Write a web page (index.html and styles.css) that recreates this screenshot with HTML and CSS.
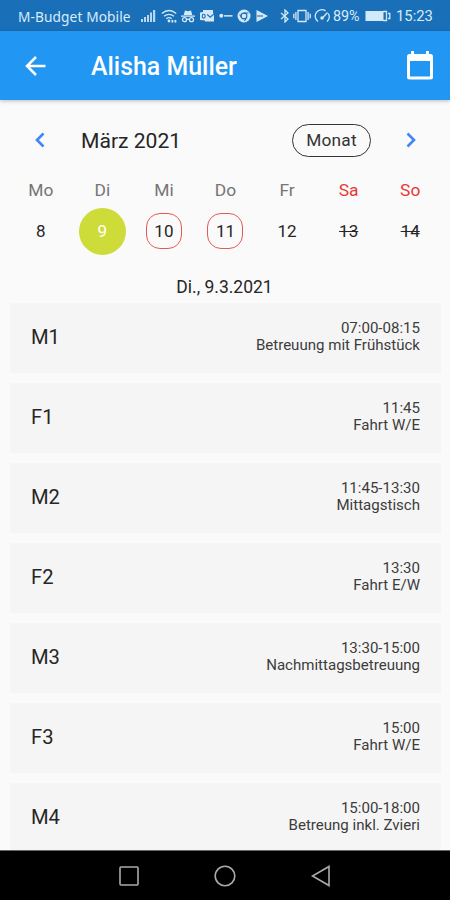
FILE: index.html
```
<!DOCTYPE html>
<html lang="de">
<head>
<meta charset="utf-8">
<title>Alisha Müller</title>
<link rel="stylesheet" href="styles.css">
</head>
<body>
<div class="phone">
  <div class="status">
    <span class="carrier">M-Budget Mobile</span>
    <div class="notifications">
      <svg width="15" height="14" viewBox="0 0 15 14"><path d="M0 10h2v3H0zM3 8h2v5H3zM6 6h2v7H6zM9 3.500h2v9.500H9zM12 1h2.200v12H12z" opacity=".85"/></svg>
      <svg width="16" height="14" viewBox="0 0 16 14"><g class="line"><path d="M.8 4.500Q8-1.500 15.200 4.500M3 7.300q5-4 10 0M5.300 9.700q2.700-2 5.400 0"/></g><circle cx="8" cy="12" r="1.400"/><path d="M10.500 11h1.800v2.500h-1.800zM13.500 11h1.800v2.500h-1.800z"/></svg>
      <svg width="14" height="14" viewBox="0 0 14 14"><path d="M4 1.500l3 .7 3-.7L11.300 6H2.700zM0 6.500h14v1.300H0z"/><g class="line"><circle cx="3.500" cy="10.700" r="2"/><circle cx="10.500" cy="10.700" r="2"/><path d="M5.500 10.300h3"/></g></svg>
      <svg width="14" height="14" viewBox="0 0 14 14"><path d="M0 3.500l3-.5V1h10v3l1 1v7.500H5v-1L0 11z"/><ellipse class="cutline" cx="3.700" cy="7.200" rx="1.500" ry="1.900"/><path class="cutline" d="M7.200 5.500l3 2.700L14 5"/></svg>
      <svg width="14" height="14" viewBox="0 0 14 14"><circle cx="2.300" cy="6.800" r="2"/><path d="M5 6.100h8.500v1.500H5z"/></svg>
      <svg width="14" height="14" viewBox="0 0 14 14"><circle cx="7" cy="7" r="6.500"/><g class="cutline"><circle cx="7" cy="7" r="2.900"/><path d="M7 4h4.500M4.500 8.500l-1.800-3M9.500 8.500L7.500 12"/></g></svg>
      <svg width="12" height="14" viewBox="0 0 12 14"><path d="M.5 1L12 7 .5 13z"/><path class="cutline" d="M1 7h6"/></svg>
    </div>
    <div class="system">
      <svg width="10" height="14" viewBox="0 0 10 14"><path class="line" d="M1 4l7 6-3 3V1l3 3-7 6"/></svg>
      <svg width="18" height="14" viewBox="0 0 18 14"><path class="line" d="M5 1.500h8v11H5zM2.900 3v8M15.100 3v8M.8 4.800v4.500M17.200 4.800v4.500"/></svg>
      <svg width="17" height="14" viewBox="0 0 17 14"><path class="line" d="M4 12.500A6 6 0 0 1 11.500 1.900M14.300 4.500a6 6 0 0 1-1.300 8M8 9.500l5.500-6"/><circle cx="8" cy="9" r="1.700"/></svg>
      <span class="percent">89%</span>
      <svg class="battery" width="26" height="14" viewBox="0 0 26 14"><path d="M.5 2h18v10H.5z"/><path class="line" d="M18 2.500h3.500v9H18M23 4.500h1.800v5H23"/></svg>
      <span class="clock">15:23</span>
    </div>
  </div>

  <header class="appbar">
    <svg width="22" height="22" viewBox="0 0 22 22"><path class="arrow" d="M20.500 11H2.500M11 2L2 11l9 9"/></svg>
    <h1>Alisha Müller</h1>
    <svg width="26" height="29" viewBox="0 0 26 29"><path fill-rule="evenodd" d="M4 0h3v3h12V0h3v3h1.500Q26 3 26 5.500v20.500q0 2.500-2.500 2.500h-21Q0 28.500 0 26V5.500Q0 3 2.500 3H4zM3 10v15.500h20V10z"/></svg>
  </header>

  <main>
    <div class="month">
      <svg width="10" height="16" viewBox="0 0 10 16"><path class="chevron" d="M8.500 1.500L2 8l6.500 6.500"/></svg>
      <h2>März 2021</h2>
      <button>Monat</button>
      <svg width="10" height="16" viewBox="0 0 10 16"><path class="chevron" d="M1.500 1.500L8 8l-6.500 6.500"/></svg>
    </div>
    <div class="week names">
      <span>Mo</span><span>Di</span><span>Mi</span><span>Do</span><span>Fr</span><span class="weekend">Sa</span><span class="weekend">So</span>
    </div>
    <div class="week days">
      <span>8</span><span class="selected">9</span><span class="marked">10</span><span class="marked">11</span><span>12</span><span class="closed">13</span><span class="closed">14</span>
    </div>
    <p class="date">Di., 9.3.2021</p>
    <ul class="list">
      <li><b>M1</b><div>07:00-08:15<br>Betreuung mit Frühstück</div></li>
      <li><b>F1</b><div>11:45<br>Fahrt W/E</div></li>
      <li><b>M2</b><div>11:45-13:30<br>Mittagstisch</div></li>
      <li><b>F2</b><div>13:30<br>Fahrt E/W</div></li>
      <li><b>M3</b><div>13:30-15:00<br>Nachmittagsbetreuung</div></li>
      <li><b>F3</b><div>15:00<br>Fahrt W/E</div></li>
      <li><b>M4</b><div>15:00-18:00<br>Betreung inkl. Zvieri</div></li>
    </ul>
  </main>

  <nav class="navbar">
    <svg width="22" height="22" viewBox="0 0 22 22"><rect x="2" y="2" width="18" height="18" rx="1"/></svg>
    <svg width="22" height="22" viewBox="0 0 22 22"><circle cx="11" cy="11" r="9.800"/></svg>
    <svg width="22" height="22" viewBox="0 0 22 22"><path d="M19 1.500v19L2.500 11z"/></svg>
  </nav>
</div>
</body>
</html>
```
FILE: styles.css
```
* { box-sizing: border-box; }
body { margin: 0; font-family: Roboto, "Liberation Sans", sans-serif; color: #262626; }
h1, h2, p, ul { margin: 0; padding: 0; }
svg { display: block; flex: none; }

.phone { width: 450px; height: 900px; display: flex; flex-direction: column; background: #fafafa; overflow: hidden; }

.status { height: 31px; flex: none; display: flex; align-items: center; padding: 1px 17px 0 18px; background: #1a70b8; color: #d9ecfa; font-size: 14px; white-space: nowrap; }
.status svg { fill: #d3e9f9; }
.status .line { fill: none; stroke: #d3e9f9; stroke-width: 1.3; }
.status .cutline { fill: none; stroke: #1a70b8; stroke-width: 1.1; }
.carrier { width: 123px; font-family: "Noto Sans", sans-serif; font-size: 13.7px; letter-spacing: .1px; }
.notifications { display: flex; gap: 4.7px; }
.system { display: flex; align-items: center; gap: 3px; margin-left: auto; }
.percent { width: 29px; margin-left: -1px; font-size: 14.3px; }
.clock { width: 37px; margin-left: 2px; font-size: 14.8px; }

.appbar { position: relative; z-index: 1; height: 69px; flex: none; display: flex; align-items: center; padding: 0 17px 0 25px; background: #2196f3; color: #fff; box-shadow: 0 1px 4px rgba(0, 0, 0, .25); }
.appbar svg { fill: #fff; }
.appbar .arrow { fill: none; stroke: #fff; stroke-width: 2.5; }
.appbar h1 { flex: 1; margin-left: 44px; padding-top: 2px; font-size: 24.9px; font-weight: 500; line-height: 30px; }

main { flex: 1; min-height: 0; overflow: hidden; padding: 0 9px 0 10px; }
.month { height: 34px; margin-top: 23px; padding: 0 25px; display: flex; align-items: center; }
.chevron { fill: none; stroke: #4285f4; stroke-width: 2.6; }
.month h2 { flex: 1; margin-left: 36px; font-size: 21.1px; font-weight: 400; }
.month button { width: 79px; height: 33px; margin-right: 35px; padding: 0; border: 1.5px solid #333; border-radius: 17px; background: none; color: #333; font: 17.3px Roboto, sans-serif; letter-spacing: .2px; }
.week { display: grid; grid-template-columns: repeat(7, 1fr); place-items: center; }
.names { height: 22px; margin-top: 22px; color: #757575; font-size: 17.4px; }
.names .weekend { color: #e53935; }
.days { height: 48px; margin-top: 6px; font-size: 17px; }
.days span { display: flex; align-items: center; justify-content: center; }
.days .selected { width: 47px; height: 47px; border-radius: 50%; background: #cddc39; color: #fff; }
.days .marked { width: 36px; height: 36px; border: 1.5px solid #e35b56; border-radius: 14px; }
.days .closed { text-decoration: line-through; }
.date { margin-top: 21px; height: 27px; line-height: 22px; font-size: 17.5px; text-align: center; padding-right: 2px; }
.list { list-style: none; display: grid; gap: 10px; }
.list li { height: 70px; display: flex; align-items: center; justify-content: space-between; padding: 0 21px 2px 21px; background: #f5f5f5; }
.list b { font-size: 20.2px; font-weight: 400; }
.list div { font-size: 15.05px; line-height: 17.5px; text-align: right; color: #3c3c3c; }

.navbar { height: 50px; flex: none; display: flex; justify-content: center; gap: 74px; padding-top: 14px; background: #000; border-top: 1px solid #666; }
.navbar svg { fill: none; stroke: #aaa; stroke-width: 1.6; }
```
